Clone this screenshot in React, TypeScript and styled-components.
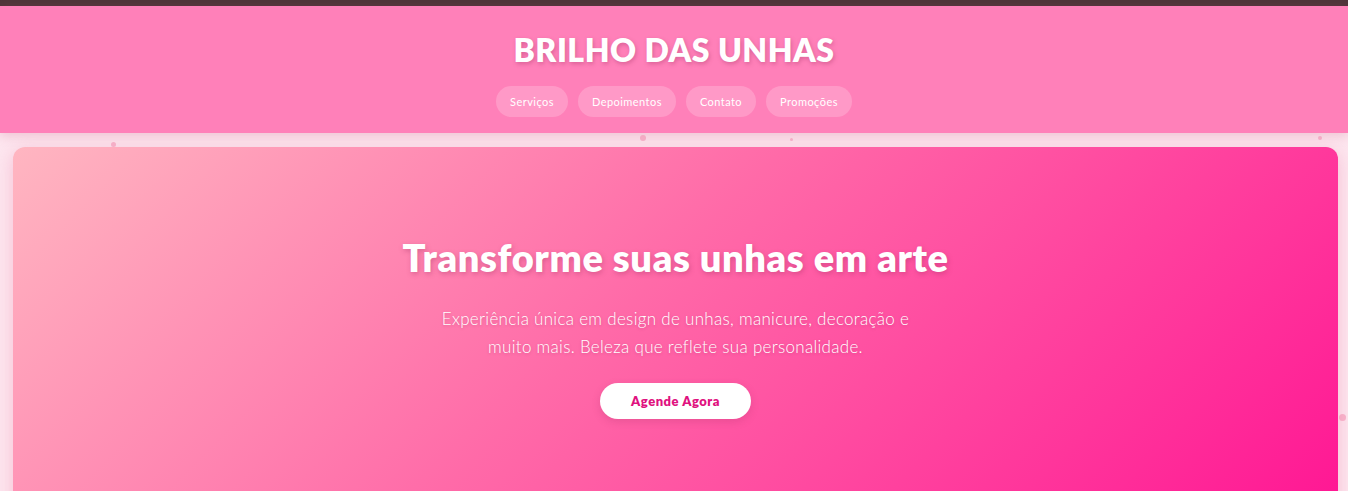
import React from "react";
import styled, { createGlobalStyle } from "styled-components";

const Global = createGlobalStyle`
  html, body { margin: 0; padding: 0; }
  body {
    background: #fde6ef;
    font-family: "Lato", "Open Sans", sans-serif;
    overflow: hidden;
  }
`;

const TopStrip = styled.div`
  height: 6px;
  background: #4f3439;
`;

const Header = styled.header`
  background: #ff80b9;
  padding: 22px 0 16px;
  display: flex;
  flex-direction: column;
  align-items: center;
  box-shadow: 0 3px 10px rgba(200, 90, 130, 0.25);
  position: relative;
  z-index: 2;
`;

const Brand = styled.h1`
  margin: 0 0 14px;
  color: #fff;
  font-size: 32px;
  line-height: 44px;
  font-weight: 800;
  letter-spacing: 0.5px;
  text-shadow: 1px 2px 4px rgba(150, 40, 90, 0.35);
`;

const Nav = styled.nav`
  display: flex;
  gap: 10px;
`;

const NavLink = styled.a`
  display: inline-flex;
  align-items: center;
  height: 31px;
  padding: 0 14px;
  border-radius: 16px;
  background: rgba(255, 255, 255, 0.2);
  color: #fff;
  font-size: 11px;
  letter-spacing: 0.45px;
  text-decoration: none;
`;

const Main = styled.main`
  position: relative;
  padding: 14px 10px 0 13px;
`;

const Sparkle = styled.span<{ $size: number }>`
  position: absolute;
  width: ${(p) => p.$size}px;
  height: ${(p) => p.$size}px;
  border-radius: 50%;
  background: rgba(240, 120, 160, 0.45);
`;

const Hero = styled.section`
  border-radius: 12px;
  background: linear-gradient(135deg, #ffb6c1 0%, #ff6aa8 45%, #ff1493 100%);
  box-shadow: 0 4px 18px rgba(230, 100, 150, 0.3);
  padding: 88px 40px 120px;
  display: flex;
  flex-direction: column;
  align-items: center;
  text-align: center;
  color: #fff;
`;

const HeroTitle = styled.h2`
  margin: 0 0 26px;
  font-size: 38px;
  line-height: 44px;
  font-weight: 800;
  letter-spacing: 0.6px;
  text-shadow: 1px 2px 5px rgba(150, 40, 90, 0.35);
`;

const HeroText = styled.p`
  margin: 0 0 22px;
  max-width: 490px;
  font-size: 17px;
  line-height: 28px;
  font-weight: 300;
  letter-spacing: 0.3px;
  text-shadow: 0 1px 3px rgba(150, 40, 90, 0.3);
`;

const Cta = styled.a`
  display: inline-flex;
  align-items: center;
  justify-content: center;
  width: 151px;
  height: 36px;
  border-radius: 18px;
  background: #fff;
  color: #e0127f;
  font-size: 13px;
  font-weight: 800;
  letter-spacing: 0.5px;
  text-decoration: none;
  box-shadow: 0 3px 8px rgba(150, 40, 90, 0.2);
`;

const sparkles = [
  { x: 111, y: 142, s: 5 },
  { x: 640, y: 135, s: 6 },
  { x: 790, y: 138, s: 3 },
  { x: 1318, y: 136, s: 4 },
  { x: 1339, y: 414, s: 7 },
];

export default function App() {
  return (
    <>
      <Global />
      <TopStrip />
      <Header>
        <Brand>BRILHO DAS UNHAS</Brand>
        <Nav>
          <NavLink href="#">Serviços</NavLink>
          <NavLink href="#">Depoimentos</NavLink>
          <NavLink href="#">Contato</NavLink>
          <NavLink href="#">Promoções</NavLink>
        </Nav>
      </Header>
      <Main>
        <Hero>
          <HeroTitle>Transforme suas unhas em arte</HeroTitle>
          <HeroText>
            Experiência única em design de unhas, manicure, decoração e muito
            mais. Beleza que reflete sua personalidade.
          </HeroText>
          <Cta href="#">Agende Agora</Cta>
        </Hero>
      </Main>
      {sparkles.map((d, i) => (
        <Sparkle
          key={i}
          $size={d.s}
          style={{ left: d.x, top: d.y, zIndex: 3 }}
        />
      ))}
    </>
  );
}
